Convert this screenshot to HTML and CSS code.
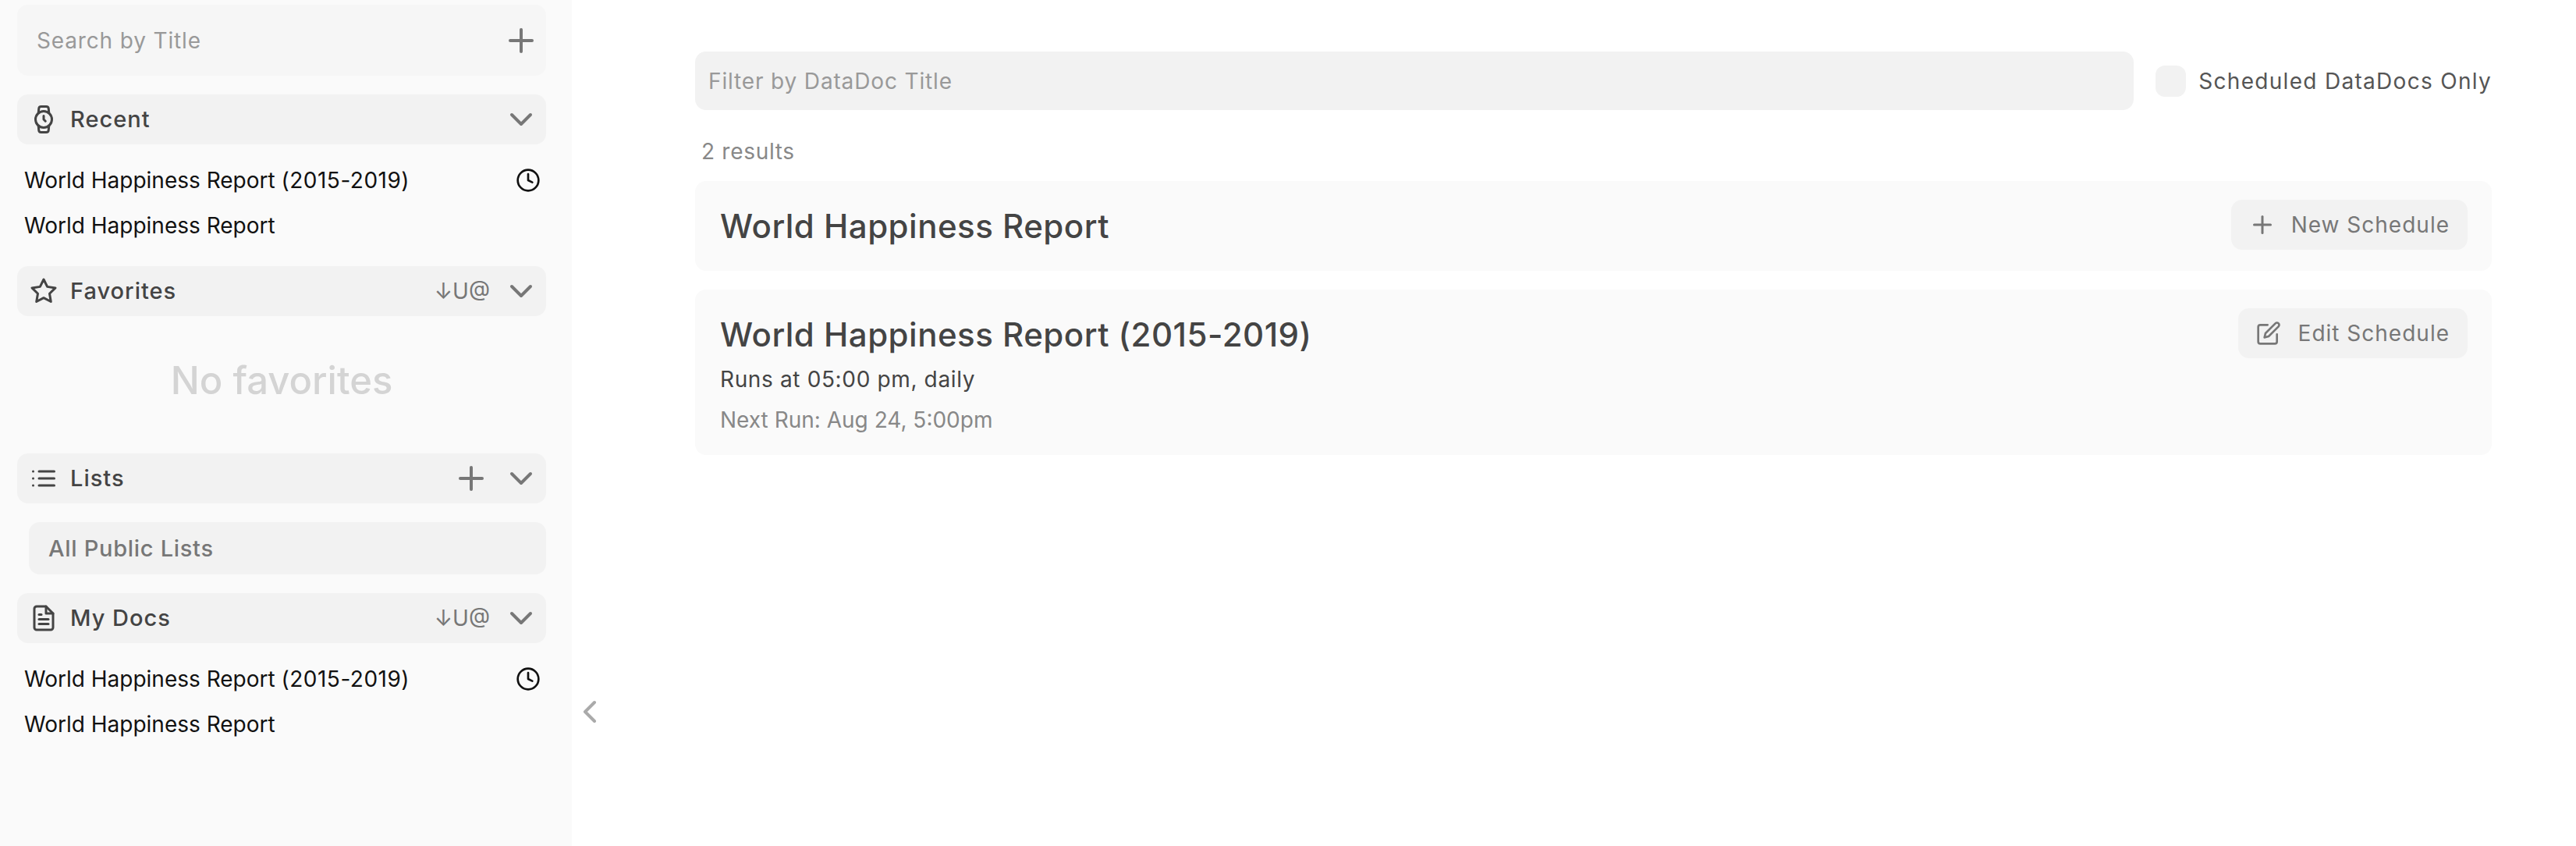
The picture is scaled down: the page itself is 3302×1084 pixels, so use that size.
FILE: index.html
```html
<!DOCTYPE html>
<html lang="en">
<head>
    <meta charset="UTF-8">
    <title>DataDoc Schedules</title>
    <link rel="stylesheet" href="styles.css">
</head>
<body>
    <aside class="sidebar">
        <div class="search-box">
            <span class="search-text">Search by Title</span>
            <svg class="icon icon-grey" viewBox="0 0 24 24"><line x1="12" y1="5" x2="12" y2="19"/><line x1="5" y1="12" x2="19" y2="12"/></svg>
        </div>

        <div class="section-head">
            <svg class="head-icon" viewBox="0 0 24 24"><circle cx="12" cy="12" r="7"/><polyline points="12 9 12 12 13.5 13.5"/><path d="M16.51 17.35l-.35 3.83a2 2 0 0 1-2 1.82H9.83a2 2 0 0 1-2-1.82l-.35-3.83m.01-10.7l.35-3.83A2 2 0 0 1 9.83 1h4.35a2 2 0 0 1 2 1.82l.35 3.83"/></svg>
            <span class="head-title">Recent</span>
            <svg class="icon icon-grey" viewBox="0 0 24 24"><polyline points="6 9 12 15 18 9"/></svg>
        </div>
        <ul class="doc-list">
            <li>
                <span>World Happiness Report <span class="years">(2015-2019)</span></span>
                <svg class="clock" viewBox="0 0 24 24"><circle cx="12" cy="12" r="10"/><polyline points="12 6 12 12 16 14"/></svg>
            </li>
            <li><span>World Happiness Report</span></li>
        </ul>

        <div class="section-head">
            <svg class="head-icon" viewBox="0 0 24 24"><polygon points="12 2 15.09 8.26 22 9.27 17 14.14 18.18 21.02 12 17.77 5.82 21.02 7 14.14 2 9.27 8.91 8.26 12 2"/></svg>
            <span class="head-title">Favorites</span>
            <span class="sort-label">↓U@</span>
            <svg class="icon icon-grey" viewBox="0 0 24 24"><polyline points="6 9 12 15 18 9"/></svg>
        </div>
        <div class="empty-note">No favorites</div>

        <div class="section-head">
            <svg class="head-icon" viewBox="0 0 24 24"><line x1="8" y1="6" x2="21" y2="6"/><line x1="8" y1="12" x2="21" y2="12"/><line x1="8" y1="18" x2="21" y2="18"/><line x1="3" y1="6" x2="3.01" y2="6"/><line x1="3" y1="12" x2="3.01" y2="12"/><line x1="3" y1="18" x2="3.01" y2="18"/></svg>
            <span class="head-title">Lists</span>
            <svg class="icon icon-grey" viewBox="0 0 24 24"><line x1="12" y1="5" x2="12" y2="19"/><line x1="5" y1="12" x2="19" y2="12"/></svg>
            <svg class="icon icon-grey" viewBox="0 0 24 24"><polyline points="6 9 12 15 18 9"/></svg>
        </div>
        <div class="public-lists">All Public Lists</div>

        <div class="section-head">
            <svg class="head-icon" viewBox="0 0 24 24"><path d="M14 2H6a2 2 0 0 0-2 2v16a2 2 0 0 0 2 2h12a2 2 0 0 0 2-2V8z"/><polyline points="14 2 14 8 20 8"/><line x1="16" y1="13" x2="8" y2="13"/><line x1="16" y1="17" x2="8" y2="17"/><polyline points="10 9 9 9 8 9"/></svg>
            <span class="head-title">My Docs</span>
            <span class="sort-label">↓U@</span>
            <svg class="icon icon-grey" viewBox="0 0 24 24"><polyline points="6 9 12 15 18 9"/></svg>
        </div>
        <ul class="doc-list">
            <li>
                <span>World Happiness Report <span class="years">(2015-2019)</span></span>
                <svg class="clock" viewBox="0 0 24 24"><circle cx="12" cy="12" r="10"/><polyline points="12 6 12 12 16 14"/></svg>
            </li>
            <li><span>World Happiness Report</span></li>
        </ul>

        <svg class="icon collapse" viewBox="0 0 24 24"><polyline points="15 18 9 12 15 6"/></svg>
    </aside>

    <main class="content">
        <div class="filter-row">
            <div class="filter-box">Filter by DataDoc Title</div>
            <span class="checkbox"></span>
            <span class="filter-label">Scheduled DataDocs Only</span>
        </div>

        <div class="result-count">2 results</div>

        <div class="card card-single">
            <div class="card-info">
                <div class="card-title">World Happiness Report</div>
            </div>
            <div class="btn">
                <svg class="btn-icon" viewBox="0 0 24 24"><line x1="12" y1="5" x2="12" y2="19"/><line x1="5" y1="12" x2="19" y2="12"/></svg>
                <span>New Schedule</span>
            </div>
        </div>

        <div class="card">
            <div class="card-info">
                <div class="card-title">World Happiness Report (2015-2019)</div>
                <div class="card-runs">Runs at 05:00 pm, daily</div>
                <div class="card-next">Next Run: Aug 24, 5:00pm</div>
            </div>
            <div class="btn btn-edit">
                <svg class="btn-icon" viewBox="0 0 24 24"><path d="M11 4H4a2 2 0 0 0-2 2v14a2 2 0 0 0 2 2h14a2 2 0 0 0 2-2v-7"/><path d="M18.5 2.5a2.121 2.121 0 0 1 3 3L12 15l-4 1 1-4 9.5-9.5z"/></svg>
                <span>Edit Schedule</span>
            </div>
        </div>
    </main>
</body>
</html>
```

FILE: styles.css
```css
* {
    box-sizing: border-box;
}

body {
    margin: 0;
    height: 1084px;
    display: flex;
    overflow: hidden;
    background: #fff;
    font-family: Inter, "Liberation Sans", sans-serif;
}

svg {
    fill: none;
    stroke: currentColor;
    stroke-linecap: round;
    stroke-linejoin: round;
    stroke-width: 2;
    flex-shrink: 0;
}

/* sidebar */
.sidebar {
    position: relative;
    width: 733px;
    height: 100%;
    padding: 6px 33px 0 22px;
    background: #fafafa;
    flex-shrink: 0;
}

.search-box {
    display: flex;
    align-items: center;
    height: 91px;
    margin-bottom: 24px;
    padding: 0 8px 0 25px;
    border-radius: 14px;
    background: #f6f6f6;
}

.search-text {
    flex: 1;
    font-size: 28px;
    letter-spacing: 0.85px;
    color: #999;
}

.icon {
    width: 48px;
    height: 48px;
}

.icon-grey {
    color: #777;
}

.section-head {
    display: flex;
    align-items: center;
    gap: 16px;
    height: 64px;
    padding: 0 8px 0 16px;
    border-radius: 14px;
    background: #f2f2f2;
}

.head-icon {
    width: 36px;
    height: 36px;
    color: #444;
}

.head-title {
    flex: 1;
    padding-bottom: 2px;
    font-size: 29px;
    font-weight: 500;
    letter-spacing: 1px;
    color: #444;
}

.sort-label {
    font-size: 28px;
    color: #777;
}

.doc-list {
    list-style: none;
    margin: 0;
    padding: 17px 0 23px 9px;
}

.doc-list li {
    display: flex;
    align-items: center;
    justify-content: space-between;
    height: 58px;
    padding-right: 7px;
    font-size: 28px;
    color: #111;
}

.years {
    letter-spacing: 0.5px;
}

.clock {
    width: 32px;
    height: 32px;
    color: #111;
}

.empty-note {
    height: 176px;
    padding-top: 52px;
    text-align: center;
    font-size: 49px;
    font-weight: 500;
    line-height: 62px;
    color: #d4d4d4;
}

.public-lists {
    display: flex;
    align-items: center;
    height: 67px;
    margin: 24px 0 24px 15px;
    padding-left: 25px;
    border-radius: 14px;
    background: #f2f2f2;
    font-size: 29px;
    font-weight: 500;
    letter-spacing: 0.7px;
    color: #777;
}

.collapse {
    position: absolute;
    top: 888px;
    left: 732px;
    color: #aaa;
}

/* main area */
.content {
    flex: 1;
    padding: 66px 108px 0 158px;
}

.filter-row {
    display: flex;
    align-items: center;
    height: 75px;
}

.filter-box {
    display: flex;
    align-items: center;
    flex: 1;
    height: 75px;
    padding-left: 17px;
    border-radius: 14px;
    background: #f2f2f2;
    font-size: 28px;
    letter-spacing: 0.85px;
    color: #999;
}

.checkbox {
    width: 39px;
    height: 40px;
    margin: 0 16px 0 28px;
    border-radius: 12px;
    background: #f2f2f2;
}

.filter-label {
    font-size: 28px;
    letter-spacing: 1.3px;
    color: #555;
}

.result-count {
    display: flex;
    align-items: center;
    height: 91px;
    padding: 15px 0 0 8px;
    font-size: 28px;
    letter-spacing: 0.7px;
    color: #888;
}

.card {
    display: flex;
    justify-content: space-between;
    align-items: flex-start;
    margin-bottom: 24px;
    padding: 24px 31px 19px 32px;
    border-radius: 14px;
    background: #fafafa;
}

.card-single {
    padding-bottom: 25px;
}

.card-info {
    padding-top: 2px;
}

.card-title {
    font-size: 42px;
    font-weight: 500;
    letter-spacing: 0.5px;
    line-height: 64px;
    color: #444;
}

.card-runs {
    font-size: 28px;
    letter-spacing: 0.64px;
    line-height: 51px;
    color: #444;
}

.card-next {
    font-size: 28px;
    line-height: 52px;
    color: #888;
}

.btn {
    display: flex;
    align-items: center;
    gap: 19px;
    height: 64px;
    padding: 0 23px 0 22px;
    border-radius: 14px;
    background: #f2f2f2;
    font-size: 28px;
    letter-spacing: 1px;
    color: #777;
}

.btn-icon {
    width: 36px;
    height: 36px;
}

.btn-edit {
    gap: 22px;
    padding-left: 23px;
}

.btn-edit .btn-icon {
    width: 32px;
    height: 32px;
}
```
